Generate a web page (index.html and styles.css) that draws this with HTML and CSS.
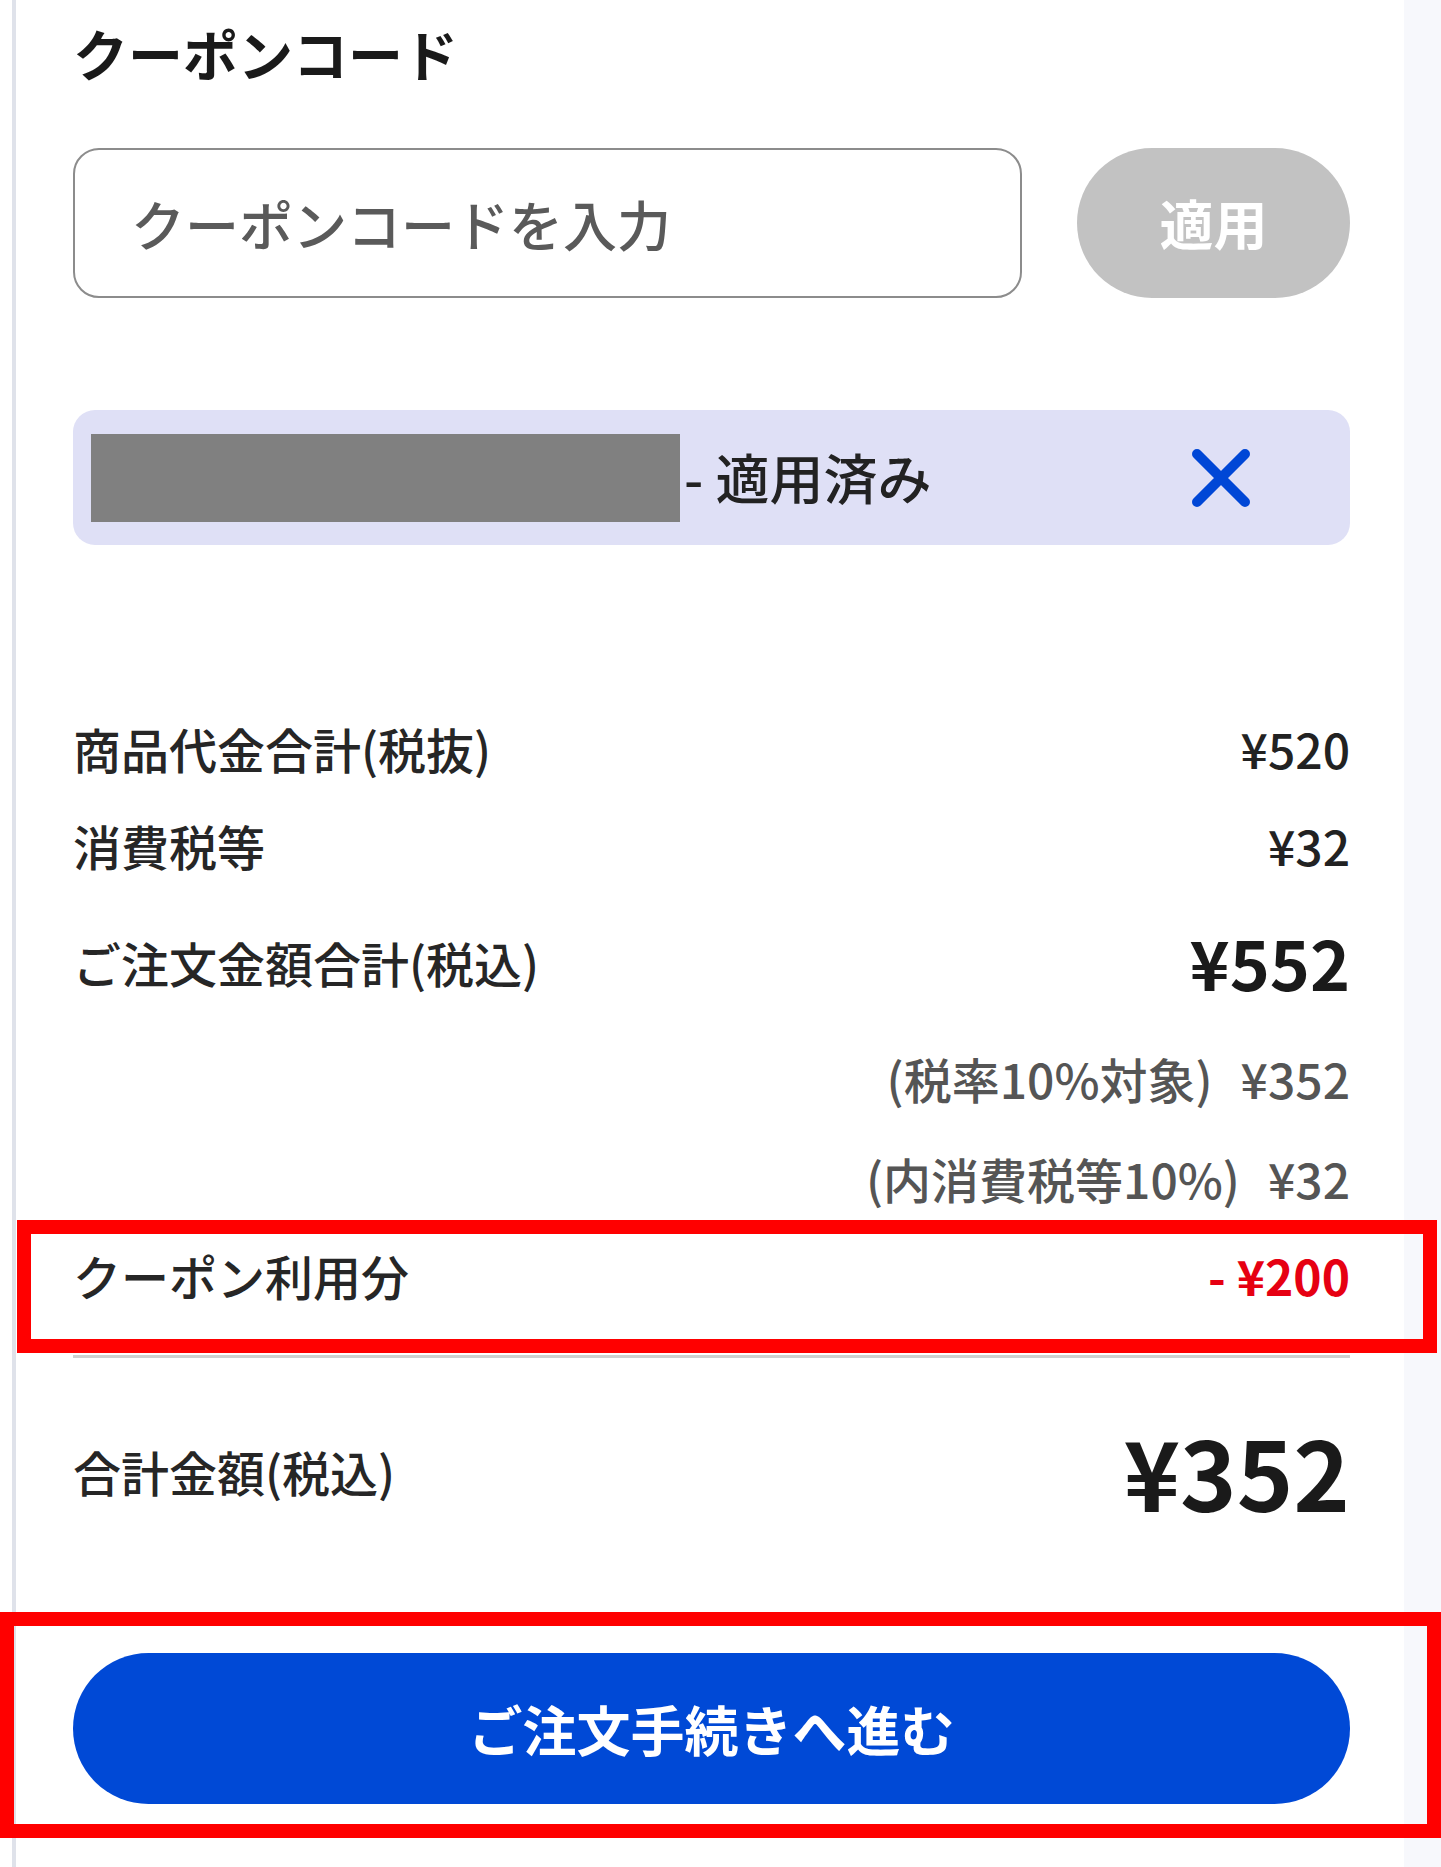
FILE: index.html
```html
<!DOCTYPE html>
<html lang="ja">
<head>
<meta charset="utf-8">
<title>クーポンコード</title>
<link rel="stylesheet" href="styles.css">
</head>
<body>
<div class="page">
  <div class="gutter-left"></div>
  <main class="panel">
    <h2 class="title">クーポンコード</h2>
    <div class="coupon-form">
      <input class="coupon-input" type="text" placeholder="クーポンコードを入力">
      <button class="apply-btn" type="button">適用</button>
    </div>
    <div class="chip">
      <span class="chip-code"></span>
      <span class="chip-text">- 適用済み</span>
      <button class="chip-remove" type="button" aria-label="削除">
        <svg width="58" height="58" viewBox="0 0 58 58" aria-hidden="true">
          <path d="M5 5 L53 53 M53 5 L5 53" stroke="#0047d6" stroke-width="10" stroke-linecap="round" fill="none"/>
        </svg>
      </button>
    </div>
    <div class="summary">
      <div class="row row-1"><span class="label">商品代金合計(税抜)</span><span class="value">¥520</span></div>
      <div class="row row-2"><span class="label">消費税等</span><span class="value">¥32</span></div>
      <div class="row row-3"><span class="label">ご注文金額合計(税込)</span><span class="value value-lg">¥552</span></div>
      <div class="row row-sub row-4"><span class="sub-label">(税率10%対象)</span><span class="sub-value">¥352</span></div>
      <div class="row row-sub row-5"><span class="sub-label">(内消費税等10%)</span><span class="sub-value">¥32</span></div>
      <div class="row row-coupon"><span class="label">クーポン利用分</span><span class="value value-discount">- ¥200</span></div>
    </div>
    <div class="divider"></div>
    <div class="total-row"><span class="label">合計金額(税込)</span><span class="value value-xl">¥352</span></div>
    <button class="checkout" type="button">ご注文手続きへ進む</button>
  </main>
  <div class="gutter-right"></div>
</div>
<div class="highlight hl-coupon"></div>
<div class="highlight hl-checkout"></div>
</body>
</html>
```
FILE: styles.css
```css
* { box-sizing: border-box; }

html, body {
  margin: 0;
  padding: 0;
}

body {
  background: #ffffff;
  font-family: "Noto Sans CJK JP", "Noto Sans", sans-serif;
  color: #222222;
  min-height: 1867px;
}

.page {
  display: flex;
  min-height: 1867px;
}

.gutter-left {
  width: 12px;
  flex: none;
  background: #ffffff;
}

.panel {
  flex: 1;
  border-left: 4px solid #dfe2ea;
  background: #ffffff;
  padding: 0 54px 0 57px;
  display: flex;
  flex-direction: column;
}

.gutter-right {
  width: 37px;
  flex: none;
  background: #f7f8fc;
}

.title {
  margin: 25px 0 0;
  font-size: 55px;
  line-height: 54px;
  font-weight: 700;
  color: #1a1a1a;
}

.coupon-form {
  margin-top: 69px;
  display: flex;
  gap: 55px;
  height: 150px;
}

.coupon-input {
  flex: 1;
  height: 150px;
  border: 2px solid #8c8c8c;
  border-radius: 26px;
  padding: 0 0 0 56px;
  font-family: "Noto Sans CJK JP", "Noto Sans", sans-serif;
  font-size: 54px;
  font-weight: 500;
  color: #222;
  background: #fff;
  outline: none;
}

.coupon-input::placeholder {
  color: #5a5a5a;
  opacity: 1;
}

.apply-btn {
  flex: none;
  width: 273px;
  height: 150px;
  border: none;
  border-radius: 75px;
  background: #c2c2c2;
  color: #ffffff;
  font-family: "Noto Sans CJK JP", "Noto Sans", sans-serif;
  font-size: 54px;
  font-weight: 700;
  line-height: 1;
  padding: 0;
}

.chip {
  margin-top: 112px;
  height: 135px;
  background: #dfe0f6;
  border-radius: 22px;
  display: flex;
  align-items: center;
  padding: 0 100px 0 18px;
}

.chip-code {
  width: 589px;
  height: 88px;
  background: #808080;
  flex: none;
}

.chip-text {
  margin-left: 4px;
  font-size: 54px;
  font-weight: 500;
  line-height: 1;
  color: #222;
  padding-bottom: 2px;
}

.chip-remove {
  margin-left: auto;
  border: none;
  background: none;
  padding: 0;
  width: 58px;
  height: 58px;
  display: block;
}

.chip-remove svg { display: block; }

.summary {
  margin-top: 153px;
  display: flex;
  flex-direction: column;
}

.row {
  display: flex;
  justify-content: space-between;
  align-items: center;
}

.row-1 { height: 100px; }
.row-2 { height: 94px; }
.row-3 { height: 140px; }
.row-4 { height: 92px; }
.row-5 { height: 108px; }
.row-coupon { height: 86px; }

.label {
  font-size: 48px;
  font-weight: 500;
  line-height: 1;
  color: #262626;
}

.value {
  font-size: 48px;
  font-weight: 500;
  line-height: 1;
  color: #222;
}

.value-lg {
  font-size: 68px;
  font-weight: 700;
  color: #1a1a1a;
}

.value-discount {
  font-weight: 700;
  color: #e60012;
}

.row-sub {
  justify-content: flex-end;
}

.sub-label,
.sub-value {
  font-size: 48px;
  font-weight: 500;
  line-height: 1;
  color: #555555;
}

.sub-value {
  margin-left: 28px;
}

.divider {
  margin-top: 37px;
  height: 3px;
  background: #cfcfcf;
}

.total-row {
  margin-top: 33px;
  height: 160px;
  display: flex;
  justify-content: space-between;
  align-items: center;
}

.value-xl {
  font-size: 96px;
  font-weight: 700;
  color: #1a1a1a;
}

.checkout {
  margin-top: 102px;
  height: 151px;
  border: none;
  border-radius: 76px;
  background: #0049d6;
  color: #ffffff;
  font-family: "Noto Sans CJK JP", "Noto Sans", sans-serif;
  font-size: 54px;
  font-weight: 700;
  line-height: 1;
  padding: 0;
  width: 100%;
}

.highlight {
  position: absolute;
  border: 14px solid #ff0000;
  pointer-events: none;
}

.hl-coupon {
  left: 17px;
  top: 1220px;
  width: 1420px;
  height: 133px;
}

.hl-checkout {
  left: 0;
  top: 1612px;
  width: 1441px;
  height: 226px;
}
```
